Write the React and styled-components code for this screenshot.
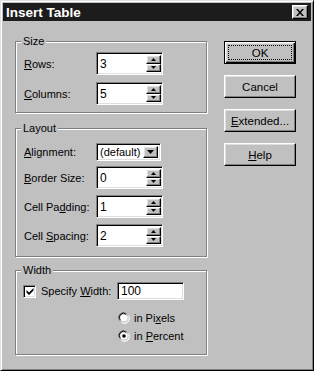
import React from 'react';
import styled, { createGlobalStyle, css } from 'styled-components';

const GlobalStyle = createGlobalStyle`
  html, body {
    margin: 0;
    padding: 0;
    background: #c0c0c0;
  }
  body {
    font-family: "Liberation Sans", Arial, sans-serif;
    font-size: 11px;
    color: #000;
    white-space: nowrap;
  }
`;

const raised = css`
  border: 1px solid;
  border-color: #fff #000 #000 #fff;
  box-shadow: inset -1px -1px 0 #808080, inset 1px 1px 0 #dfdfdf;
`;

const sunken = css`
  border: 1px solid;
  border-color: #808080 #fff #fff #808080;
  box-shadow: inset 1px 1px 0 #000, inset -1px -1px 0 #dfdfdf;
`;

const Window = styled.div`
  width: 314px;
  height: 371px;
  box-sizing: border-box;
  background: #c0c0c0;
  border: 1px solid;
  border-color: #dfdfdf #000 #000 #dfdfdf;
  box-shadow: inset 1px 1px 0 #fff, inset -1px -1px 0 #808080;
  padding: 2px;
  display: flex;
  flex-direction: column;
`;

const TitleBar = styled.div`
  height: 18px;
  background: #1c1c1c;
  color: #fff;
  display: flex;
  align-items: center;
  justify-content: space-between;
  padding: 0 3px;
  font-weight: bold;
  font-size: 13.5px;
`;

const CloseBtn = styled.div`
  ${raised};
  width: 14px;
  height: 12px;
  background: #c0c0c0;
  display: flex;
  align-items: center;
  justify-content: center;
`;

const Body = styled.div`
  display: flex;
  gap: 17px;
  padding: 20px 0 0 12px;
`;

const LeftCol = styled.div`
  display: flex;
  flex-direction: column;
`;

const Group = styled.div`
  position: relative;
  width: 192px;
  box-sizing: border-box;
  border: 1px solid #808080;
  box-shadow: inset 1px 1px 0 #fff, 1px 1px 0 #fff;
  margin-top: ${p => p.$mt || 0}px;
  padding: ${p => p.$pad};
  display: flex;
  flex-direction: column;
  gap: ${p => p.$gap || 0}px;
`;

const Caption = styled.span`
  position: absolute;
  top: -8px;
  left: 5px;
  padding: 0 2px;
  background: #c0c0c0;
  line-height: 14px;
`;

const Row = styled.div`
  display: grid;
  grid-template-columns: ${p => p.$label || 72}px auto;
  align-items: center;
  height: ${p => p.$h || 23}px;
  margin-top: ${p => p.$mt || 0}px;
`;

const Key = styled.span`
  text-decoration: underline;
  text-underline-offset: 1px;
`;

const Field = styled.div`
  ${sunken};
  width: ${p => p.$w || 67}px;
  height: ${p => p.$h || 23}px;
  box-sizing: border-box;
  background: #fff;
  display: flex;
  align-items: center;
  justify-content: space-between;
  padding: 2px 1px 2px 3px;
  font-size: 12px;
`;

const Spin = styled.div`
  display: flex;
  flex-direction: column;
  height: 100%;
  width: 15px;
`;

const SpinBtn = styled.div`
  ${raised};
  flex: 1;
  background: #c0c0c0;
  display: flex;
  align-items: center;
  justify-content: center;
`;

const Select = styled(Field)`
  padding: 2px;
  font-size: 11px;
`;

const DropBtn = styled.div`
  ${raised};
  width: 15px;
  height: 100%;
  box-sizing: border-box;
  background: #c0c0c0;
  display: flex;
  align-items: center;
  justify-content: center;
`;

const CheckRow = styled.div`
  display: flex;
  align-items: center;
  gap: 5px;
`;

const Box = styled.div`
  ${sunken};
  width: 13px;
  height: 13px;
  box-sizing: border-box;
  background: #fff;
  display: flex;
  align-items: center;
  justify-content: center;
  margin-left: -1px;
`;

const RadioList = styled.div`
  display: flex;
  flex-direction: column;
  margin: 9px 0 0 94px;
`;

const RadioRow = styled.div`
  display: flex;
  align-items: center;
  gap: 4px;
  height: 18px;
`;

const Buttons = styled.div`
  display: flex;
  flex-direction: column;
  gap: 11px;
`;

const Button = styled.div`
  ${raised};
  width: 72px;
  height: 23px;
  box-sizing: border-box;
  background: #c0c0c0;
  display: flex;
  align-items: center;
  justify-content: center;
  position: relative;
  font-size: 11.5px;
  ${p => p.$default && css`
    border: 1px solid #000;
    box-shadow: inset 1px 1px 0 #fff, inset -1px -1px 0 #000, inset -2px -2px 0 #808080, inset 2px 2px 0 #dfdfdf;
    &::after {
      content: '';
      position: absolute;
      inset: 3px;
      border: 1px dotted #000;
    }
  `}
`;

const Up = () => (
  <svg width="5" height="3" viewBox="0 0 5 3"><polygon points="2.5,0 5,3 0,3" fill="#000" /></svg>
);
const Down = () => (
  <svg width="5" height="3" viewBox="0 0 5 3"><polygon points="0,0 5,0 2.5,3" fill="#000" /></svg>
);

const Spinner = ({ value }) => (
  <Field>
    <span>{value}</span>
    <Spin>
      <SpinBtn><Up /></SpinBtn>
      <SpinBtn><Down /></SpinBtn>
    </Spin>
  </Field>
);

const Radio = ({ checked }) => (
  <svg width="12" height="12" viewBox="0 0 12 12">
    <path d="M1.5 8.5 A5 5 0 0 1 8.5 1.5" stroke="#808080" strokeWidth="1" fill="none" />
    <path d="M2.5 8.2 A4 4 0 0 1 8.2 2.5" stroke="#000" strokeWidth="1" fill="none" />
    <circle cx="6" cy="6" r="3.6" fill="#fff" />
    <path d="M10.5 3.5 A5 5 0 0 1 3.5 10.5" stroke="#fff" strokeWidth="1" fill="none" />
    <path d="M9.5 3.8 A4 4 0 0 1 3.8 9.5" stroke="#dfdfdf" strokeWidth="1" fill="none" />
    {checked && <circle cx="6" cy="6" r="1.8" fill="#000" />}
  </svg>
);

export default function App() {
  return (
    <>
      <GlobalStyle />
      <Window>
        <TitleBar>
          <span>Insert Table</span>
          <CloseBtn>
            <svg width="8" height="7" viewBox="0 0 8 7">
              <path d="M0 0h2l2 2.5L6 0h2L5 3.5 8 7H6L4 4.5 2 7H0l3-3.5z" fill="#000" />
            </svg>
          </CloseBtn>
        </TitleBar>
        <Body>
          <LeftCol>
            <Group $pad="10px 8px 7px" $gap={7}>
              <Caption>Size</Caption>
              <Row>
                <span><Key>R</Key>ows:</span>
                <Spinner value="3" />
              </Row>
              <Row>
                <span><Key>C</Key>olumns:</span>
                <Spinner value="5" />
              </Row>
            </Group>

            <Group $mt={15} $pad="14px 8px 9px" $gap={6}>
              <Caption>Layout</Caption>
              <Row $h={18}>
                <span><Key>A</Key>lignment:</span>
                <Select $w={65} $h={18}>
                  <span style={{ paddingLeft: 1 }}>(default)</span>
                  <DropBtn>
                    <svg width="7" height="4" viewBox="0 0 7 4"><polygon points="0,0 7,0 3.5,4" fill="#000" /></svg>
                  </DropBtn>
                </Select>
              </Row>
              <Row $mt={-1}>
                <span><Key>B</Key>order Size:</span>
                <Spinner value="0" />
              </Row>
              <Row>
                <span>Cell Pa<Key>d</Key>ding:</span>
                <Spinner value="1" />
              </Row>
              <Row>
                <span>Cell <Key>S</Key>pacing:</span>
                <Spinner value="2" />
              </Row>
            </Group>

            <Group $mt={13} $pad="11px 8px 9px">
              <Caption>Width</Caption>
              <Row $label={93} $h={18}>
                <CheckRow>
                  <Box>
                    <svg width="8" height="8" viewBox="0 0 8 8">
                      <path d="M0.5 3l2.5 2.5L7.5 1v2.5L3 8 0.5 5.5z" fill="#000" />
                    </svg>
                  </Box>
                  <span>Specify <Key>W</Key>idth:</span>
                </CheckRow>
                <Field $w={67} $h={18}>
                  <span>100</span>
                </Field>
              </Row>
              <RadioList>
                <RadioRow>
                  <Radio />
                  <span>in Pi<Key>x</Key>els</span>
                </RadioRow>
                <RadioRow>
                  <Radio checked />
                  <span>in <Key>P</Key>ercent</span>
                </RadioRow>
              </RadioList>
            </Group>
          </LeftCol>

          <Buttons>
            <Button $default>OK</Button>
            <Button>Cancel</Button>
            <Button><span><Key>E</Key>xtended...</span></Button>
            <Button><span><Key>H</Key>elp</span></Button>
          </Buttons>
        </Body>
      </Window>
    </>
  );
}
